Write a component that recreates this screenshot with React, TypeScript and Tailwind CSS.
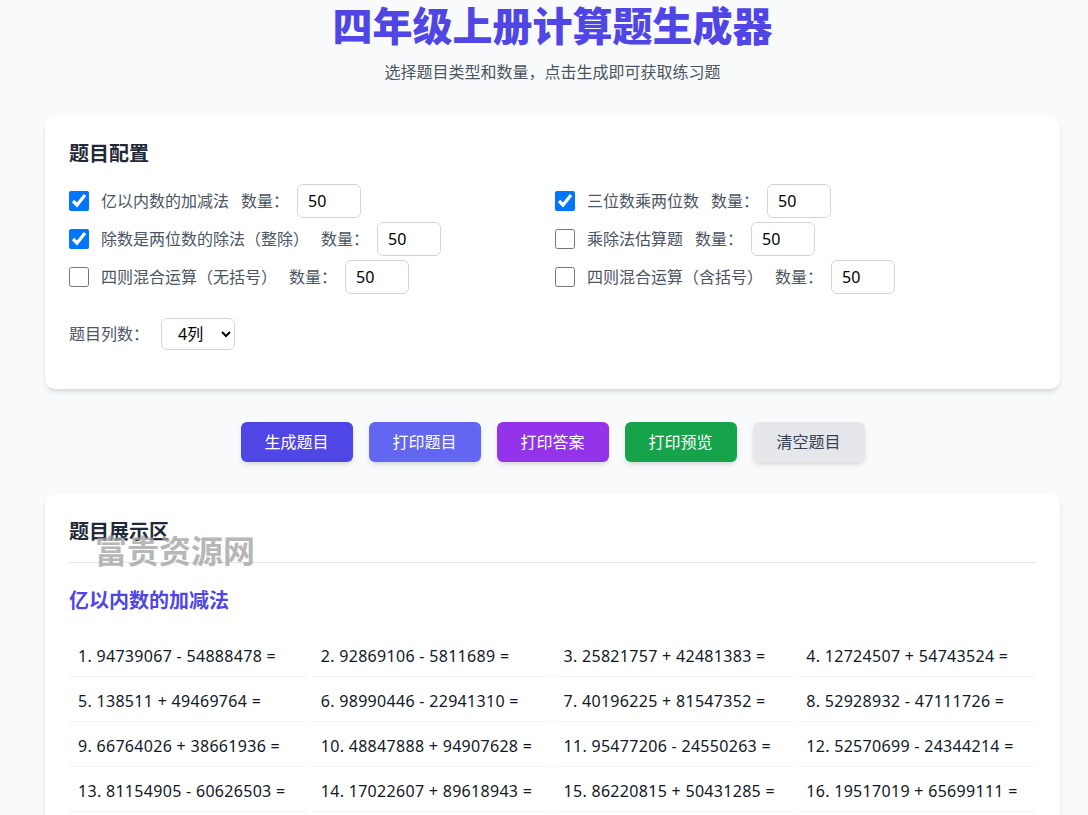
import { useState } from 'react';

const types = [
  { name: '亿以内数的加减法', checked: true },
  { name: '三位数乘两位数', checked: true },
  { name: '除数是两位数的除法（整除）', checked: true },
  { name: '乘除法估算题', checked: false },
  { name: '四则混合运算（无括号）', checked: false },
  { name: '四则混合运算（含括号）', checked: false },
];

const problems = [
  '94739067 - 54888478 =', '92869106 - 5811689 =', '25821757 + 42481383 =', '12724507 + 54743524 =',
  '138511 + 49469764 =', '98990446 - 22941310 =', '40196225 + 81547352 =', '52928932 - 47111726 =',
  '66764026 + 38661936 =', '48847888 + 94907628 =', '95477206 - 24550263 =', '52570699 - 24344214 =',
  '81154905 - 60626503 =', '17022607 + 89618943 =', '86220815 + 50431285 =', '19517019 + 65699111 =',
  '35071216 + 2208451 =', '71130528 - 45218809 =', '60312894 + 13748092 =', '88410367 - 30982145 =',
];

export default function App() {
  const [checks, setChecks] = useState(types.map((t) => t.checked));
  const [cols, setCols] = useState('4');

  return (
    <div className="min-h-screen bg-[#f9fafb] pl-[45px] pr-[28px] pb-10" style={{ fontFamily: '"Noto Sans", "Noto Sans CJK SC", sans-serif' }}>
      <header className="text-center">
        <h1 className="text-[40px] leading-[48px] font-black text-[#4f46e5]" style={{ fontFamily: '"Noto Sans CJK SC", sans-serif' }}>四年级上册计算题生成器</h1>
        <p className="mt-[14px] text-base leading-5 text-[#4b5563]">选择题目类型和数量，点击生成即可获取练习题</p>
      </header>

      <section className="mt-[34px] bg-white rounded-[10px] shadow-md px-6 pt-6 pb-[39px]">
        <h2 className="text-xl leading-7 font-bold text-[#1f2937]">题目配置</h2>
        <div className="mt-4 grid grid-cols-[486px_1fr] gap-y-1">
          {types.map((t, i) => (
            <div key={t.name} className="flex items-center h-[34px]">
              <label className="flex items-center gap-3 text-base text-[#4b5563]">
                <input type="checkbox" className="w-5 h-5 m-0" checked={checks[i]} onChange={() => setChecks(checks.map((c, j) => (j === i ? !c : c)))} />
                <span>{t.name}</span>
              </label>
              <span className="ml-3 text-base text-[#4b5563]">数量：</span>
              <input className="ml-2 w-16 h-[34px] border border-[#d1d5db] rounded-md px-2.5 text-base text-black" defaultValue="50" />
            </div>
          ))}
        </div>
        <div className="mt-6 flex items-center gap-3">
          <span className="text-base text-[#4b5563]">题目列数：</span>
          <select value={cols} onChange={(e) => setCols(e.target.value)} className="w-[74px] h-8 border border-[#d1d5db] rounded-md pl-3 text-base text-black bg-white">
            <option value="2">2列</option>
            <option value="3">3列</option>
            <option value="4">4列</option>
          </select>
        </div>
      </section>

      <div className="mt-[33px] flex justify-center gap-4">
        <button className="w-28 h-10 rounded-md bg-[#4f46e5] text-white text-base shadow-md">生成题目</button>
        <button className="w-28 h-10 rounded-md bg-[#6366f1] text-white text-base shadow-md">打印题目</button>
        <button className="w-28 h-10 rounded-md bg-[#9333ea] text-white text-base shadow-md">打印答案</button>
        <button className="w-28 h-10 rounded-md bg-[#16a34a] text-white text-base shadow-md">打印预览</button>
        <button className="w-28 h-10 rounded-md bg-[#e5e7eb] text-[#374151] text-base shadow-md">清空题目</button>
      </div>

      <section className="relative mt-8 bg-white rounded-[10px] shadow-md px-6 pt-6 pb-6">
        <h2 className="text-xl leading-7 font-bold text-[#1f2937] pb-4 border-b border-[#e5e7eb]">题目展示区</h2>
        <span className="absolute left-[50px] top-[37px] text-[32px] leading-9 font-bold text-[#a3a3a3]/80 select-none" style={{ fontFamily: '"Noto Sans CJK SC", sans-serif' }}>富贵资源网</span>
        <h3 className="mt-6 mb-[21px] text-xl leading-7 font-bold text-[#4f46e5]">亿以内数的加减法</h3>
        <div className="grid grid-cols-4 gap-1">
          {problems.map((p, i) => (
            <div key={i} className="p-2 pl-[9px] text-base leading-6 tracking-[0.3px] text-[#111827] border-b border-[#f3f4f6]">
              {i + 1}. {p}
            </div>
          ))}
        </div>
      </section>
    </div>
  );
}
